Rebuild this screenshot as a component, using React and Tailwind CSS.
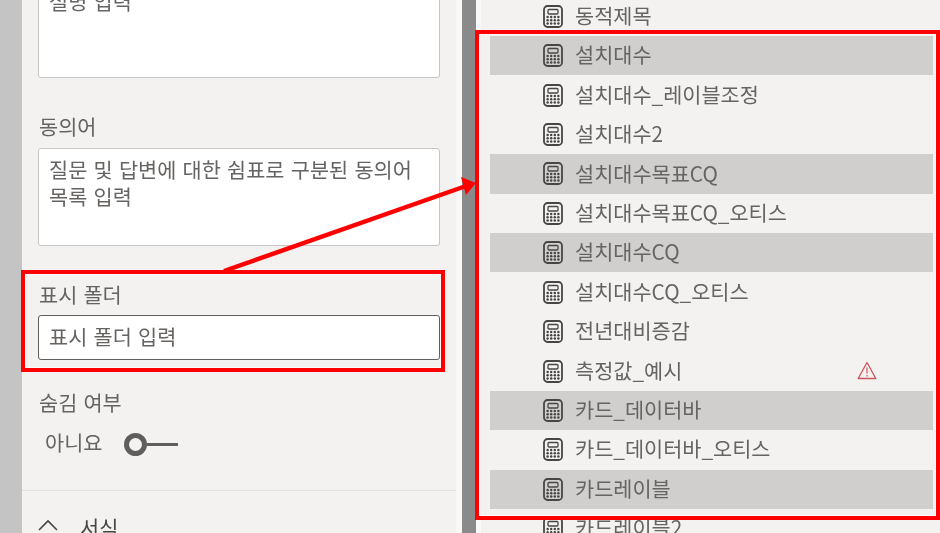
const FONT = "font-['Noto_Sans_CJK_KR','Noto_Sans',sans-serif]";

// rows of the field list, hi = selected
const fields = [
  { name: '동적제목' },
  { name: '설치대수', hi: true },
  { name: '설치대수_레이블조정' },
  { name: '설치대수2' },
  { name: '설치대수목표CQ', hi: true },
  { name: '설치대수목표CQ_오티스' },
  { name: '설치대수CQ', hi: true },
  { name: '설치대수CQ_오티스' },
  { name: '전년대비증감' },
  { name: '측정값_예시', warn: true },
  { name: '카드_데이터바', hi: true },
  { name: '카드_데이터바_오티스' },
  { name: '카드레이블', hi: true },
  { name: '카드레이블2' },
];

const CalcIcon = () => (
  <svg width="20" height="23" viewBox="0 0 20 23" fill="none" className="shrink-0">
    <rect x="1" y="1" width="18" height="21" rx="3.5" stroke="#484644" strokeWidth="1.8" />
    <rect x="5" y="4.5" width="10" height="4.5" rx="1" stroke="#484644" strokeWidth="1.3" />
    {[12, 15.3, 18.6].map((y) =>
      [4.6, 8.2, 11.8, 15.4].map((x) => <circle key={`${x}-${y}`} cx={x} cy={y} r="1.25" fill="#484644" />)
    )}
  </svg>
);

const WarnIcon = () => (
  <svg width="20" height="19" viewBox="0 0 20 19" fill="none" className="absolute left-[367px] top-[10px]">
    <path d="M10 1.5 L18.8 17.5 H1.2 Z" stroke="#d0555a" strokeWidth="1.3" strokeLinejoin="round" />
    <path d="M10 6.5 V12.5 M10 14 V15.6" stroke="#d0555a" strokeWidth="1.2" />
  </svg>
);

const FieldRow = ({ name, hi, warn }) => (
  <div className={`relative flex h-[39.43px] items-center pl-[53px] ${hi ? 'bg-[#d0cfcd]' : ''}`}>
    <CalcIcon />
    <span className="ml-[12px] pb-[2px] text-[20.8px] leading-none text-[#666462]">{name}</span>
    {warn && <WarnIcon />}
  </div>
);

const Label = ({ children, className = '' }) => (
  <div className={`ml-px text-[20.8px] leading-[28px] text-[#666462] [word-spacing:1.5px] ${className}`}>{children}</div>
);

const Box = ({ children, className = '' }) => (
  <div className={`rounded-[3px] border bg-white px-[10px] text-[20.8px] leading-[27px] text-[#666462] [word-spacing:1.6px] ${className}`}>
    {children}
  </div>
);

export default function App() {
  return (
    <div className={`relative flex h-[533px] w-[940px] overflow-hidden bg-[#f8f8f8] blur-[0.4px] ${FONT}`}>
      <div className="w-[22px] shrink-0 bg-[#c4c4c4]" />

      {/* properties panel */}
      <div className="w-[434px] shrink-0 bg-[#f3f2f1]">
        <div className="px-[16px]">
          <Box className="-mt-[22px] h-[100px] w-[402px] border-[#c8c6c4] pt-[9px]">설명 입력</Box>
          <Label className="mt-[34px]">동의어</Label>
          <Box className="mt-[8px] h-[98px] w-[402px] border-[#c8c6c4] pt-[7px]">
            질문 및 답변에 대한 쉼표로 구분된 동의어
            <br />
            목록 입력
          </Box>
          <Label className="mt-[34px]">표시 폴더</Label>
          <Box className="mt-[7px] flex h-[45px] w-[402px] items-center border-[#605e5c] pb-[2px]">표시 폴더 입력</Box>
          <Label className="mt-[28px]">숨김 여부</Label>
          <div className="mt-[12px] flex h-[28px] items-center pl-[7px]">
            <span className="text-[20.8px] leading-none text-[#666462]">아니요</span>
            <div className="ml-[22px] mt-[5px] flex items-center">
              <div className="h-[23px] w-[23px] rounded-full border-[5px] border-[#5f5e5c] bg-[#f3f2f1]" />
              <div className="h-[3px] w-[31px] bg-[#5f5e5c]" />
            </div>
          </div>
        </div>
        <div className="mt-[34px] h-px bg-[#e3e2e0]" />
        <div className="mt-[22px] flex items-center pl-[16px]">
          <svg width="20" height="12" viewBox="0 0 20 12" fill="none" className="-mt-[4px]">
            <path d="M1 11 L10 2 L19 11" stroke="#484644" strokeWidth="1.6" />
          </svg>
          <span className="ml-[22px] text-[20.8px] leading-[28px] text-[#484644]">서식</span>
        </div>
      </div>

      <div className="w-[6px] shrink-0" />
      <div className="w-[14px] shrink-0 bg-[#8a8a8a]" />
      <div className="w-[5px] shrink-0" />

      {/* field list */}
      <div className="flex-1 bg-[#f3f2f1] pl-[9px] pr-[7px]">
        <div className="-mt-[3.5px]">
          {fields.map((f) => (
            <FieldRow key={f.name} {...f} />
          ))}
        </div>
      </div>

      {/* annotations drawn over the screenshot */}
      <div className="absolute left-[21px] top-[270px] h-[102px] w-[424px] border-[4px] border-[#ff0000] shadow-[inset_0_0_0_1px_rgba(255,255,255,0.5)]" />
      <div className="absolute left-[475px] top-[30px] h-[490px] w-[465px] border-[4px] border-[#ff0000] shadow-[inset_0_0_0_1px_rgba(255,255,255,0.7)]" />
      <svg width="940" height="533" viewBox="0 0 940 533" className="pointer-events-none absolute left-0 top-0">
        <line x1="224" y1="271" x2="466" y2="186" stroke="#ff0000" strokeWidth="4.5" />
        <polygon points="476,183 461,177 466,195" fill="#ff0000" />
      </svg>
    </div>
  );
}
